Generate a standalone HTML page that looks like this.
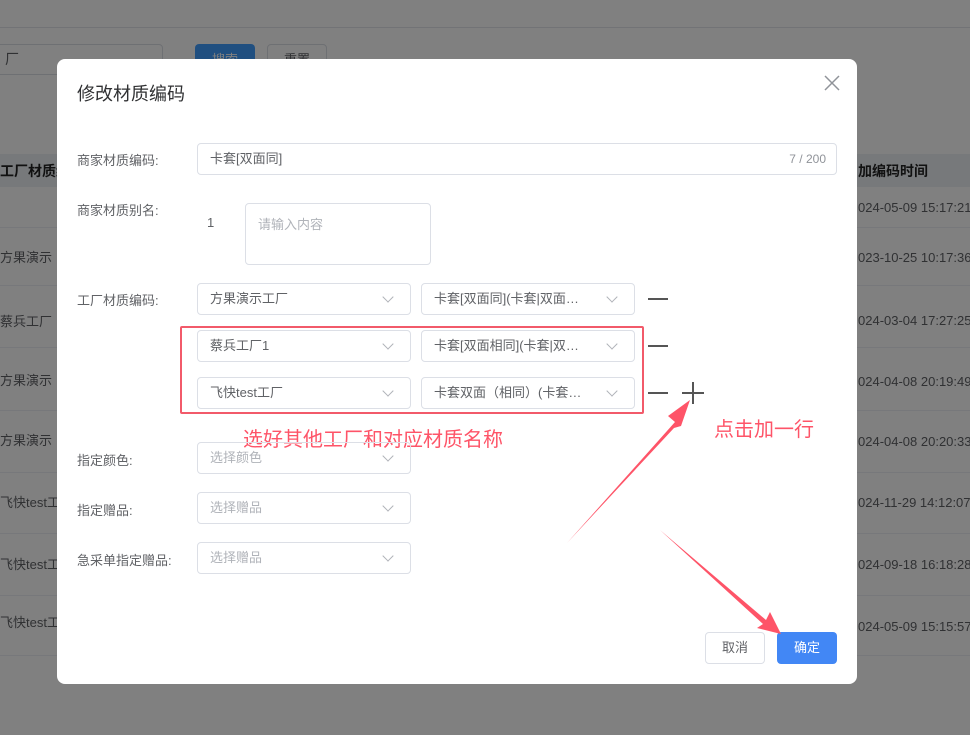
<!DOCTYPE html>
<html style="background:#808080"><head><meta charset="utf-8"><style>
*{box-sizing:border-box;margin:0;padding:0}
html,body{background:#808080}
body{width:970px;height:735px;overflow:hidden;position:relative;font-family:"Liberation Sans","Noto Sans CJK SC",sans-serif;font-size:14px;color:#606266}
.abs{position:absolute}
.fill{position:absolute;left:0;top:0;width:970px;height:735px;background:#808080}
.modal{position:absolute;left:57px;top:59px;width:800px;height:625px;background:#fff;border-radius:8px}
.lbl{position:absolute;left:20px;font-size:13px;color:#606266;top:0}
.inp{position:absolute;height:32px;border:1px solid #dcdfe6;border-radius:4px;font-size:13px;color:#606266;padding-left:12px;line-height:30px;white-space:nowrap;overflow:hidden}
.inp.ph{color:#b0b3b9}
.chev{position:absolute;right:18px;top:9px;width:8px;height:8px;border-right:1px solid #b0b3b9;border-bottom:1px solid #b0b3b9;transform:rotate(45deg)}
.minus{position:absolute;width:20px;height:2px;background:#555}
.row{position:absolute;left:0;width:970px;border-top:1px solid #77787b}
.dt{position:absolute;left:858px;font-size:13px;color:#303133;white-space:nowrap}
.lt{position:absolute;left:0;font-size:13px;color:#303133;white-space:nowrap}
</style></head><body>
<div class="fill"></div>
 <div class="abs" style="left:0;top:0;width:970px;height:28px;border-bottom:1px solid #727376"></div>
 <div class="abs" style="left:-10px;top:44px;width:173px;height:31px;border:1px solid #6e7073;border-radius:4px;padding-left:14px;line-height:29px;color:#303133">厂</div>
 <div class="abs" style="left:195px;top:44px;width:60px;height:31px;background:#204f80;border-radius:4px;color:#808080;text-align:center;line-height:31px;font-size:13px">搜索</div>
 <div class="abs" style="left:267px;top:44px;width:60px;height:31px;border:1px solid #6e7073;border-radius:4px;text-align:center;line-height:29px;font-size:13px;color:#303133">重置</div>
 <div class="abs" style="left:0;top:154px;width:970px;height:33px;background:#77797b"></div>
 <div class="abs" style="left:0;top:161px;font-weight:bold;color:#111;font-size:14px">工厂材质编</div>
 <div class="abs" style="left:858px;top:161px;font-weight:bold;color:#111;font-size:14px">加编码时间</div>
 <div class="dt" style="top:200px">024-05-09 15:17:21</div>
 <div class="row" style="top:227px"></div>
 <div class="lt" style="top:247px">方果演示</div><div class="dt" style="top:250px">023-10-25 10:17:36</div>
 <div class="row" style="top:285px"></div>
 <div class="lt" style="top:311px">蔡兵工厂</div><div class="dt" style="top:313px">024-03-04 17:27:25</div>
 <div class="row" style="top:347px"></div>
 <div class="lt" style="top:370px">方果演示</div><div class="dt" style="top:374px">024-04-08 20:19:49</div>
 <div class="row" style="top:410px"></div>
 <div class="lt" style="top:430px">方果演示</div><div class="dt" style="top:434px">024-04-08 20:20:33</div>
 <div class="row" style="top:472px"></div>
 <div class="lt" style="top:492px">飞快test工</div><div class="dt" style="top:495px">024-11-29 14:12:07</div>
 <div class="row" style="top:533px"></div>
 <div class="lt" style="top:554px">飞快test工</div><div class="dt" style="top:557px">024-09-18 16:18:28</div>
 <div class="row" style="top:595px"></div>
 <div class="lt" style="top:612px">飞快test工</div><div class="dt" style="top:619px">024-05-09 15:15:57</div>
 <div class="row" style="top:655px"></div>
<div class="modal">
 <div class="abs" style="left:20px;top:21px;font-size:18px;color:#303133">修改材质编码</div>
 <svg class="abs" style="left:766px;top:15px" width="18" height="18" viewBox="0 0 18 18"><path d="M2 2L16 16M16 2L2 16" stroke="#909399" stroke-width="1.5"/></svg>
 <div class="lbl" style="top:91px">商家材质编码:</div>
 <div class="inp" style="left:140px;top:84px;width:640px">卡套[双面同]<span style="position:absolute;right:10px;font-size:12px;color:#909399">7 / 200</span></div>
 <div class="lbl" style="top:141px">商家材质别名:</div>
 <div class="abs" style="left:150px;top:156px;font-size:13px">1</div>
 <div class="abs" style="left:188px;top:144px;width:186px;height:62px;border:1px solid #dcdfe6;border-radius:4px;padding:10px 12px;font-size:13px;color:#b0b3b9">请输入内容</div>
 <div class="lbl" style="top:231px">工厂材质编码:</div>
 <div class="inp" style="left:140px;top:224px;width:214px">方果演示工厂<span class="chev"></span></div>
 <div class="inp" style="left:364px;top:224px;width:214px">卡套[双面同](卡套|双面…<span class="chev"></span></div>
 <div class="minus" style="left:591px;top:239px"></div>
 <div class="inp" style="left:140px;top:271px;width:214px">蔡兵工厂1<span class="chev"></span></div>
 <div class="inp" style="left:364px;top:271px;width:214px">卡套[双面相同](卡套|双…<span class="chev"></span></div>
 <div class="minus" style="left:591px;top:286px"></div>
 <div class="inp" style="left:140px;top:318px;width:214px">飞快test工厂<span class="chev"></span></div>
 <div class="inp" style="left:364px;top:318px;width:214px">卡套双面（相同）(卡套…<span class="chev"></span></div>
 <div class="minus" style="left:591px;top:333px"></div>
 <svg class="abs" style="left:624px;top:322px" width="24" height="24"><path d="M12 1V23M1 12H23" stroke="#555" stroke-width="2"/></svg>
 <div class="abs" style="left:123px;top:267px;width:464px;height:88px;border:2px solid #f25a6a;border-radius:2px"></div>
 <div class="abs" style="left:186px;top:364px;font-size:20px;color:#fe5468">选好其他工厂和对应材质名称</div>
 <div class="abs" style="left:657px;top:354px;font-size:20px;color:#fe5468">点击加一行</div>
 <div class="lbl" style="top:391px">指定颜色:</div>
 <div class="inp ph" style="left:140px;top:383px;width:214px">选择颜色<span class="chev"></span></div>
 <div class="lbl" style="top:441px">指定赠品:</div>
 <div class="inp ph" style="left:140px;top:433px;width:214px">选择赠品<span class="chev"></span></div>
 <div class="lbl" style="top:491px">急采单指定赠品:</div>
 <div class="inp ph" style="left:140px;top:483px;width:214px">选择赠品<span class="chev"></span></div>
 <div class="abs" style="left:648px;top:573px;width:60px;height:32px;border:1px solid #dcdfe6;border-radius:4px;text-align:center;line-height:30px;font-size:13px">取消</div>
 <div class="abs" style="left:720px;top:573px;width:60px;height:32px;background:#4287f5;border-radius:4px;text-align:center;line-height:32px;font-size:13px;color:#fff">确定</div>
</div>
<svg class="abs" style="left:0;top:0" width="970" height="735">
 <polygon points="567,543 675,422 668,416 690,400 681,426 674,428" fill="#fe5468"/>
 <polygon points="660,530 766,620 770,612 781,634 757,628 763,624" fill="#fe5468"/>
</svg>
</body></html>
